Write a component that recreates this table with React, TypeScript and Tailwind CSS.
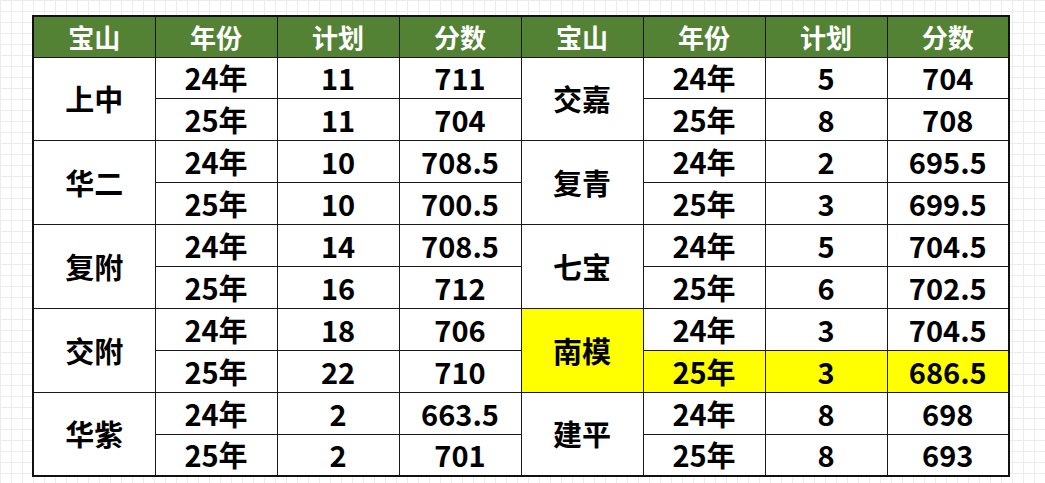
const left = [
  { name: "上中", rows: [["24年", "11", "711"], ["25年", "11", "704"]] },
  { name: "华二", rows: [["24年", "10", "708.5"], ["25年", "10", "700.5"]] },
  { name: "复附", rows: [["24年", "14", "708.5"], ["25年", "16", "712"]] },
  { name: "交附", rows: [["24年", "18", "706"], ["25年", "22", "710"]] },
  { name: "华紫", rows: [["24年", "2", "663.5"], ["25年", "2", "701"]] },
];

const right = [
  { name: "交嘉", rows: [["24年", "5", "704"], ["25年", "8", "708"]] },
  { name: "复青", rows: [["24年", "2", "695.5"], ["25年", "3", "699.5"]] },
  { name: "七宝", rows: [["24年", "5", "704.5"], ["25年", "6", "702.5"]] },
  { name: "南模", rows: [["24年", "3", "704.5"], ["25年", "3", "686.5"]], hl: true },
  { name: "建平", rows: [["24年", "8", "698"], ["25年", "8", "693"]] },
];

const headers = ["宝山", "年份", "计划", "分数", "宝山", "年份", "计划", "分数"];

const cell = "border border-[#1a1a1a] text-center align-middle p-0";

export default function App() {
  return (
    <div className="w-[1045px] h-[483px] bg-white bg-[linear-gradient(#ececec_1px,transparent_1px),linear-gradient(90deg,#ececec_1px,transparent_1px)] bg-[size:11px_11px] pt-[15px] pl-[32px] font-['Noto_Sans_CJK_SC','Noto_Sans',sans-serif]">
      <table className="border-collapse border-2 border-[#111] table-fixed w-[978px] h-[462px] bg-white">
        <colgroup>
          {headers.map((_, i) => (
            <col key={i} className="w-[122px]" />
          ))}
        </colgroup>
        <thead>
          <tr className="h-[41px] bg-[#548235]">
            {headers.map((h, i) => (
              <th key={i} className={`${cell} text-white text-[26px] font-bold leading-none`}>
                {h}
              </th>
            ))}
          </tr>
        </thead>
        <tbody className="text-[29px] font-bold text-black leading-none">
          {left.map((l, gi) => {
            const r = right[gi];
            return [0, 1].map((ri) => {
              const rowHl = r.hl && ri === 1;
              return (
                <tr key={`${gi}-${ri}`} className="h-[41px]">
                  {ri === 0 && (
                    <td rowSpan={2} className={cell}>
                      {l.name}
                    </td>
                  )}
                  {l.rows[ri].map((v, ci) => (
                    <td key={ci} className={cell}>
                      {v}
                    </td>
                  ))}
                  {ri === 0 && (
                    <td rowSpan={2} className={`${cell} ${r.hl ? "bg-[#ffff00]" : ""}`}>
                      {r.name}
                    </td>
                  )}
                  {r.rows[ri].map((v, ci) => (
                    <td key={ci} className={`${cell} ${rowHl ? "bg-[#ffff00]" : ""}`}>
                      {v}
                    </td>
                  ))}
                </tr>
              );
            });
          })}
        </tbody>
      </table>
    </div>
  );
}
